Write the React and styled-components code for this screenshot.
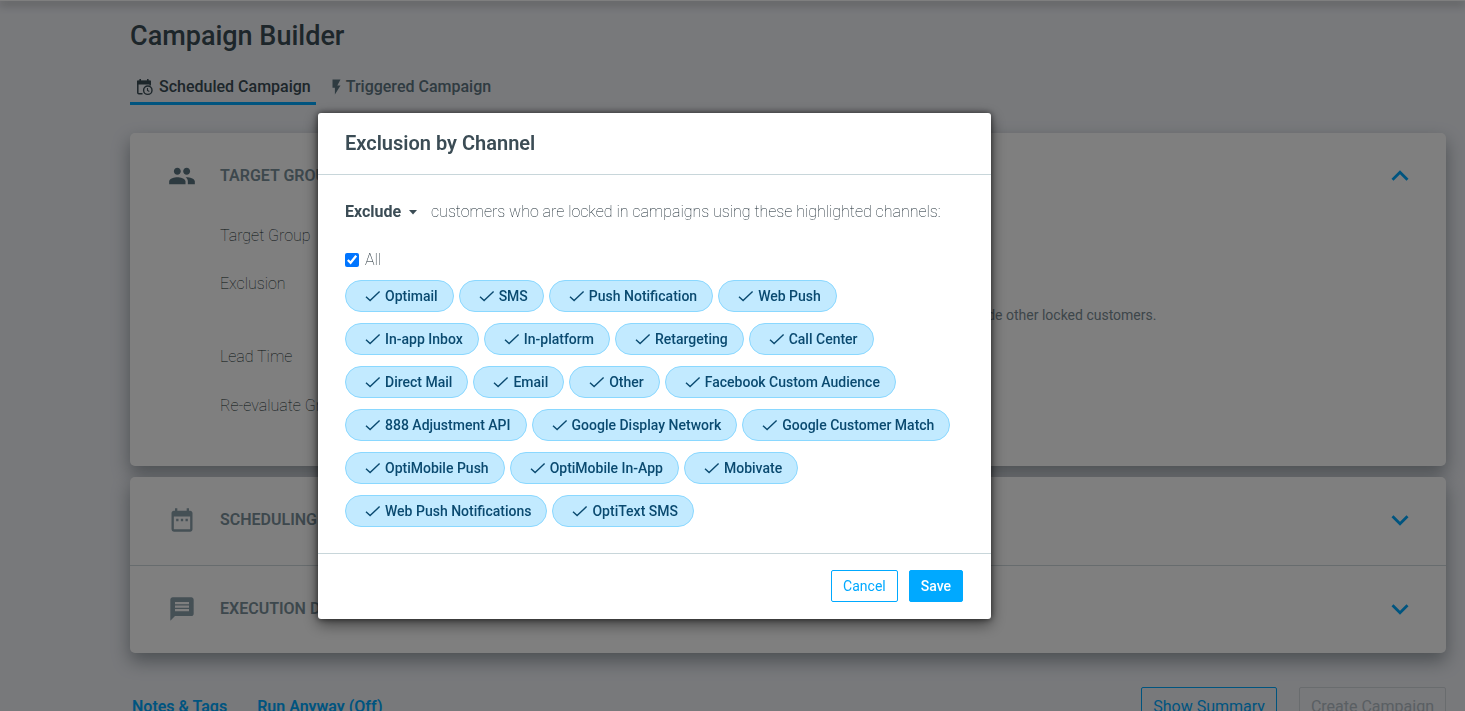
import React, { useState } from "react";
import styled, { createGlobalStyle } from "styled-components";
import { MdPeople, MdDateRange, MdMessage, MdExpandLess, MdExpandMore } from "react-icons/md";

const GlobalStyle = createGlobalStyle`
  * { box-sizing: border-box; }
  html, body { margin: 0; }
  body {
    height: 100vh;
    overflow: hidden;
    background: #f0f2f7;
    color: #3b4c55;
    font-family: Roboto, "Liberation Sans", sans-serif;
    font-size: 16px;
    line-height: 20px;
  }
  h1, h2, p { margin: 0; }
  button, select, input { font: inherit; }
`;

const TopBar = styled.header`
  height: 1px;
  background: #ffffff;
  box-shadow: 0 2px 10px 1px rgba(0, 0, 0, 0.45);
`;

const Page = styled.main`
  padding: 18px 19px 0 130px;
`;

const PageTitle = styled.h1`
  font-size: 27px;
  font-weight: 500;
  line-height: 34px;
`;

const Tabs = styled.nav`
  display: flex;
  gap: 10px;
  margin: 18px 0 28px;
`;

const Tab = styled.button`
  display: flex;
  align-items: center;
  gap: 5px;
  height: 34px;
  padding: 0 5px 0 6px;
  border: 0;
  border-bottom: 3px solid ${(p) => (p.$active ? "#00a9ff" : "transparent")};
  background: none;
  color: ${(p) => (p.$active ? "#3b4c55" : "#5f7682")};
  font-weight: 500;
`;

const Card = styled.section`
  border-radius: 5px;
  background: #ffffff;
  box-shadow: 0 8px 18px rgba(20, 35, 45, 0.4);
  margin-bottom: 11px;
`;

const SectionHead = styled.div`
  display: flex;
  align-items: center;
  height: 88px;
  padding: 0 29px 2px 38px;
  color: ${(p) => (p.$muted ? "#8ba0ab" : "#5b7480")};
  & + & { border-top: 1px solid #cfd8dc; }
`;

const SectionTitle = styled.h2`
  flex: 1;
  margin-left: 24px;
  color: #7b909b;
  font-size: 16px;
  font-weight: 600;
  line-height: 20px;
`;

const ToggleButton = styled.button`
  display: flex;
  padding: 0;
  border: 0;
  background: none;
  color: #00a9ff;
`;

const Fields = styled.div`
  display: grid;
  grid-template-columns: 220px 1fr;
  grid-template-rows: 48px 73px 49px 70px;
  padding: 5px 0 0 90px;
  color: #0c1c26;
  font-weight: 100;
`;

const FieldText = styled.p`
  align-self: end;
  padding: 0 0 22px 514px;
  font-size: 14px;
  font-weight: 400;
  color: #7b8c95;
`;

const PageActions = styled.div`
  display: flex;
  gap: 22px;
  align-items: center;
  padding-top: 23px;
`;

const ActionLinks = styled.div`
  display: flex;
  flex: 1;
  gap: 30px;
  padding-left: 2px;
`;

const ActionLink = styled.a`
  color: #00a9ff;
  font-weight: 600;
  text-decoration: none;
`;

const Button = styled.button`
  height: ${(p) => (p.$large ? 40 : 32)}px;
  padding: 0 11px;
  border: 1px solid #00a9ff;
  border-radius: 2px;
  background: ${(p) => (p.$primary ? "#00a9ff" : "transparent")};
  color: ${(p) => (p.$primary ? "#ffffff" : "#00a9ff")};
  font-size: ${(p) => (p.$large ? 16 : 14)}px;
  font-weight: ${(p) => (p.$primary ? 500 : 400)};
  &:disabled { border-color: #d3d8dd; color: #b4bec6; }
`;

const Scrim = styled.div`
  position: fixed;
  inset: 0;
  display: flex;
  align-items: flex-start;
  justify-content: center;
  padding: 113px 156px 0 0;
  background: rgba(0, 0, 0, 0.5);
`;

const Dialog = styled.div`
  width: 100%;
  max-width: 673px;
  border-radius: 3px;
  background: #ffffff;
  box-shadow: 0 5px 15px rgba(0, 0, 0, 0.5), 0 0 6px rgba(0, 0, 0, 0.6);
`;

const DialogHead = styled.header`
  padding: 18px 26px 19px 27px;
  border-bottom: 1px solid #c8d6da;
`;

const DialogTitle = styled.h2`
  font-size: 20px;
  font-weight: 600;
  line-height: 24px;
`;

const DialogBody = styled.div`
  padding: 27px 27px 26px;
`;

const Sentence = styled.div`
  display: flex;
  align-items: center;
  gap: 13px;
  margin-bottom: 28px;
`;

const SelectBox = styled.label`
  display: flex;
  align-items: center;
  gap: 6px;
`;

const SentenceText = styled.span`
  color: #0c1c26;
  font-weight: 100;
`;

const ModeSelect = styled.select`
  appearance: none;
  padding: 0;
  border: 0;
  background: none;
  color: inherit;
  font-weight: 700;
`;

const AllOption = styled.label`
  display: flex;
  align-items: center;
  gap: 6px;
  margin-bottom: 10px;
  color: #0c1c26;
  font-weight: 100;
`;

const Checkbox = styled.input`
  width: 14px;
  height: 14px;
  margin: 0;
  accent-color: #0075ff;
`;

const ChipRows = styled.div`
  display: grid;
  gap: 11px;
`;

const ChipRow = styled.div`
  display: flex;
  gap: 5px;
`;

const Chip = styled.button`
  display: flex;
  align-items: center;
  gap: 4px;
  height: 32px;
  padding: 0 15px 0 19px;
  border: 1px solid #8ad8ff;
  border-radius: 16px;
  background: ${(p) => (p.$on ? "#c2eaff" : "#ffffff")};
  color: #0a4a70;
  font-size: 14px;
  font-weight: 500;
  white-space: nowrap;
`;

const DialogFoot = styled.footer`
  display: flex;
  justify-content: flex-end;
  gap: 11px;
  padding: 16px 28px 17px;
  border-top: 1px solid #c8d6da;
`;

const CalendarClock = () => (
  <svg width="18" height="18" viewBox="0 0 18 18" fill="none" stroke="currentColor" aria-hidden="true">
    <path d="M6.5 15.7H2.8a1 1 0 0 1-1-1V3.5h12.4v4" strokeWidth="1.5" />
    <path d="M1 3.6a1 1 0 0 1 1-1h12a1 1 0 0 1 1 1v2.8H1z" fill="currentColor" stroke="none" />
    <path d="M4.2 1v3M11.8 1v3" strokeWidth="1.6" />
    <circle cx="11.8" cy="12.2" r="4.2" strokeWidth="1.4" />
    <path d="M11.5 10v2.5l1.8 1" strokeWidth="1.1" />
  </svg>
);

const Bolt = () => (
  <svg width="9" height="16" viewBox="0 0 9 16" fill="currentColor" aria-hidden="true">
    <path d="M.5.5v8.3h2.4v6.7l5.6-9H5.3l3.2-6z" />
  </svg>
);

const Tick = () => (
  <svg width="16" height="16" viewBox="0 0 16 16" fill="none" stroke="currentColor" strokeWidth="1.4" aria-hidden="true">
    <path d="M1 8.8 5.1 12.6 14.6 3.6" />
  </svg>
);

const Caret = () => (
  <svg width="10" height="5" viewBox="0 0 10 5" fill="currentColor" aria-hidden="true">
    <path d="M1 0h8L5 4.5z" />
  </svg>
);

const channelRows = [
  ["Optimail", "SMS", "Push Notification", "Web Push"],
  ["In-app Inbox", "In-platform", "Retargeting", "Call Center"],
  ["Direct Mail", "Email", "Other", "Facebook Custom Audience"],
  ["888 Adjustment API", "Google Display Network", "Google Customer Match"],
  ["OptiMobile Push", "OptiMobile In-App", "Mobivate"],
  ["Web Push Notifications", "OptiText SMS"],
];
const allChannels = channelRows.flat();

export default function App() {
  const [selected, setSelected] = useState(allChannels);
  const toggle = (name) =>
    setSelected((s) => (s.includes(name) ? s.filter((n) => n !== name) : [...s, name]));
  const all = selected.length === allChannels.length;

  return (
    <>
      <GlobalStyle />
      <TopBar />
      <Page>
        <PageTitle>Campaign Builder</PageTitle>
        <Tabs>
          <Tab $active><CalendarClock />Scheduled Campaign</Tab>
          <Tab><Bolt />Triggered Campaign</Tab>
        </Tabs>
        <Card>
          <SectionHead>
            <MdPeople size={28} />
            <SectionTitle>TARGET GROUP</SectionTitle>
            <ToggleButton aria-label="Collapse target group"><MdExpandLess size={34} /></ToggleButton>
          </SectionHead>
          <Fields>
            <span>Target Group</span><span />
            <span>Exclusion</span><FieldText>Exclude other locked customers.</FieldText>
            <span>Lead Time</span><span />
            <span>Re-evaluate Group</span><span />
          </Fields>
        </Card>
        <Card>
          <SectionHead $muted>
            <MdDateRange size={28} />
            <SectionTitle>SCHEDULING</SectionTitle>
            <ToggleButton aria-label="Expand scheduling"><MdExpandMore size={34} /></ToggleButton>
          </SectionHead>
          <SectionHead $muted>
            <MdMessage size={28} />
            <SectionTitle>EXECUTION DETAILS</SectionTitle>
            <ToggleButton aria-label="Expand execution details"><MdExpandMore size={34} /></ToggleButton>
          </SectionHead>
        </Card>
        <PageActions>
          <ActionLinks>
            <ActionLink href="#notes">Notes &amp; Tags</ActionLink>
            <ActionLink href="#run">Run Anyway (Off)</ActionLink>
          </ActionLinks>
          <Button $large>Show Summary</Button>
          <Button $large disabled>Create Campaign</Button>
        </PageActions>
      </Page>
      <Scrim>
        <Dialog role="dialog" aria-modal="true" aria-labelledby="dialog-title">
          <DialogHead><DialogTitle id="dialog-title">Exclusion by Channel</DialogTitle></DialogHead>
          <DialogBody>
            <Sentence>
              <SelectBox>
                <ModeSelect aria-label="Customer rule"><option>Exclude</option></ModeSelect>
                <Caret />
              </SelectBox>
              <SentenceText>customers who are locked in campaigns using these highlighted channels:</SentenceText>
            </Sentence>
            <AllOption>
              <Checkbox type="checkbox" checked={all} onChange={() => setSelected(all ? [] : allChannels)} />
              All
            </AllOption>
            <ChipRows>
              {channelRows.map((row) => (
                <ChipRow key={row[0]}>
                  {row.map((name) => (
                    <Chip key={name} $on={selected.includes(name)} aria-pressed={selected.includes(name)} onClick={() => toggle(name)}>
                      <Tick />{name}
                    </Chip>
                  ))}
                </ChipRow>
              ))}
            </ChipRows>
          </DialogBody>
          <DialogFoot>
            <Button>Cancel</Button>
            <Button $primary>Save</Button>
          </DialogFoot>
        </Dialog>
      </Scrim>
    </>
  );
}
